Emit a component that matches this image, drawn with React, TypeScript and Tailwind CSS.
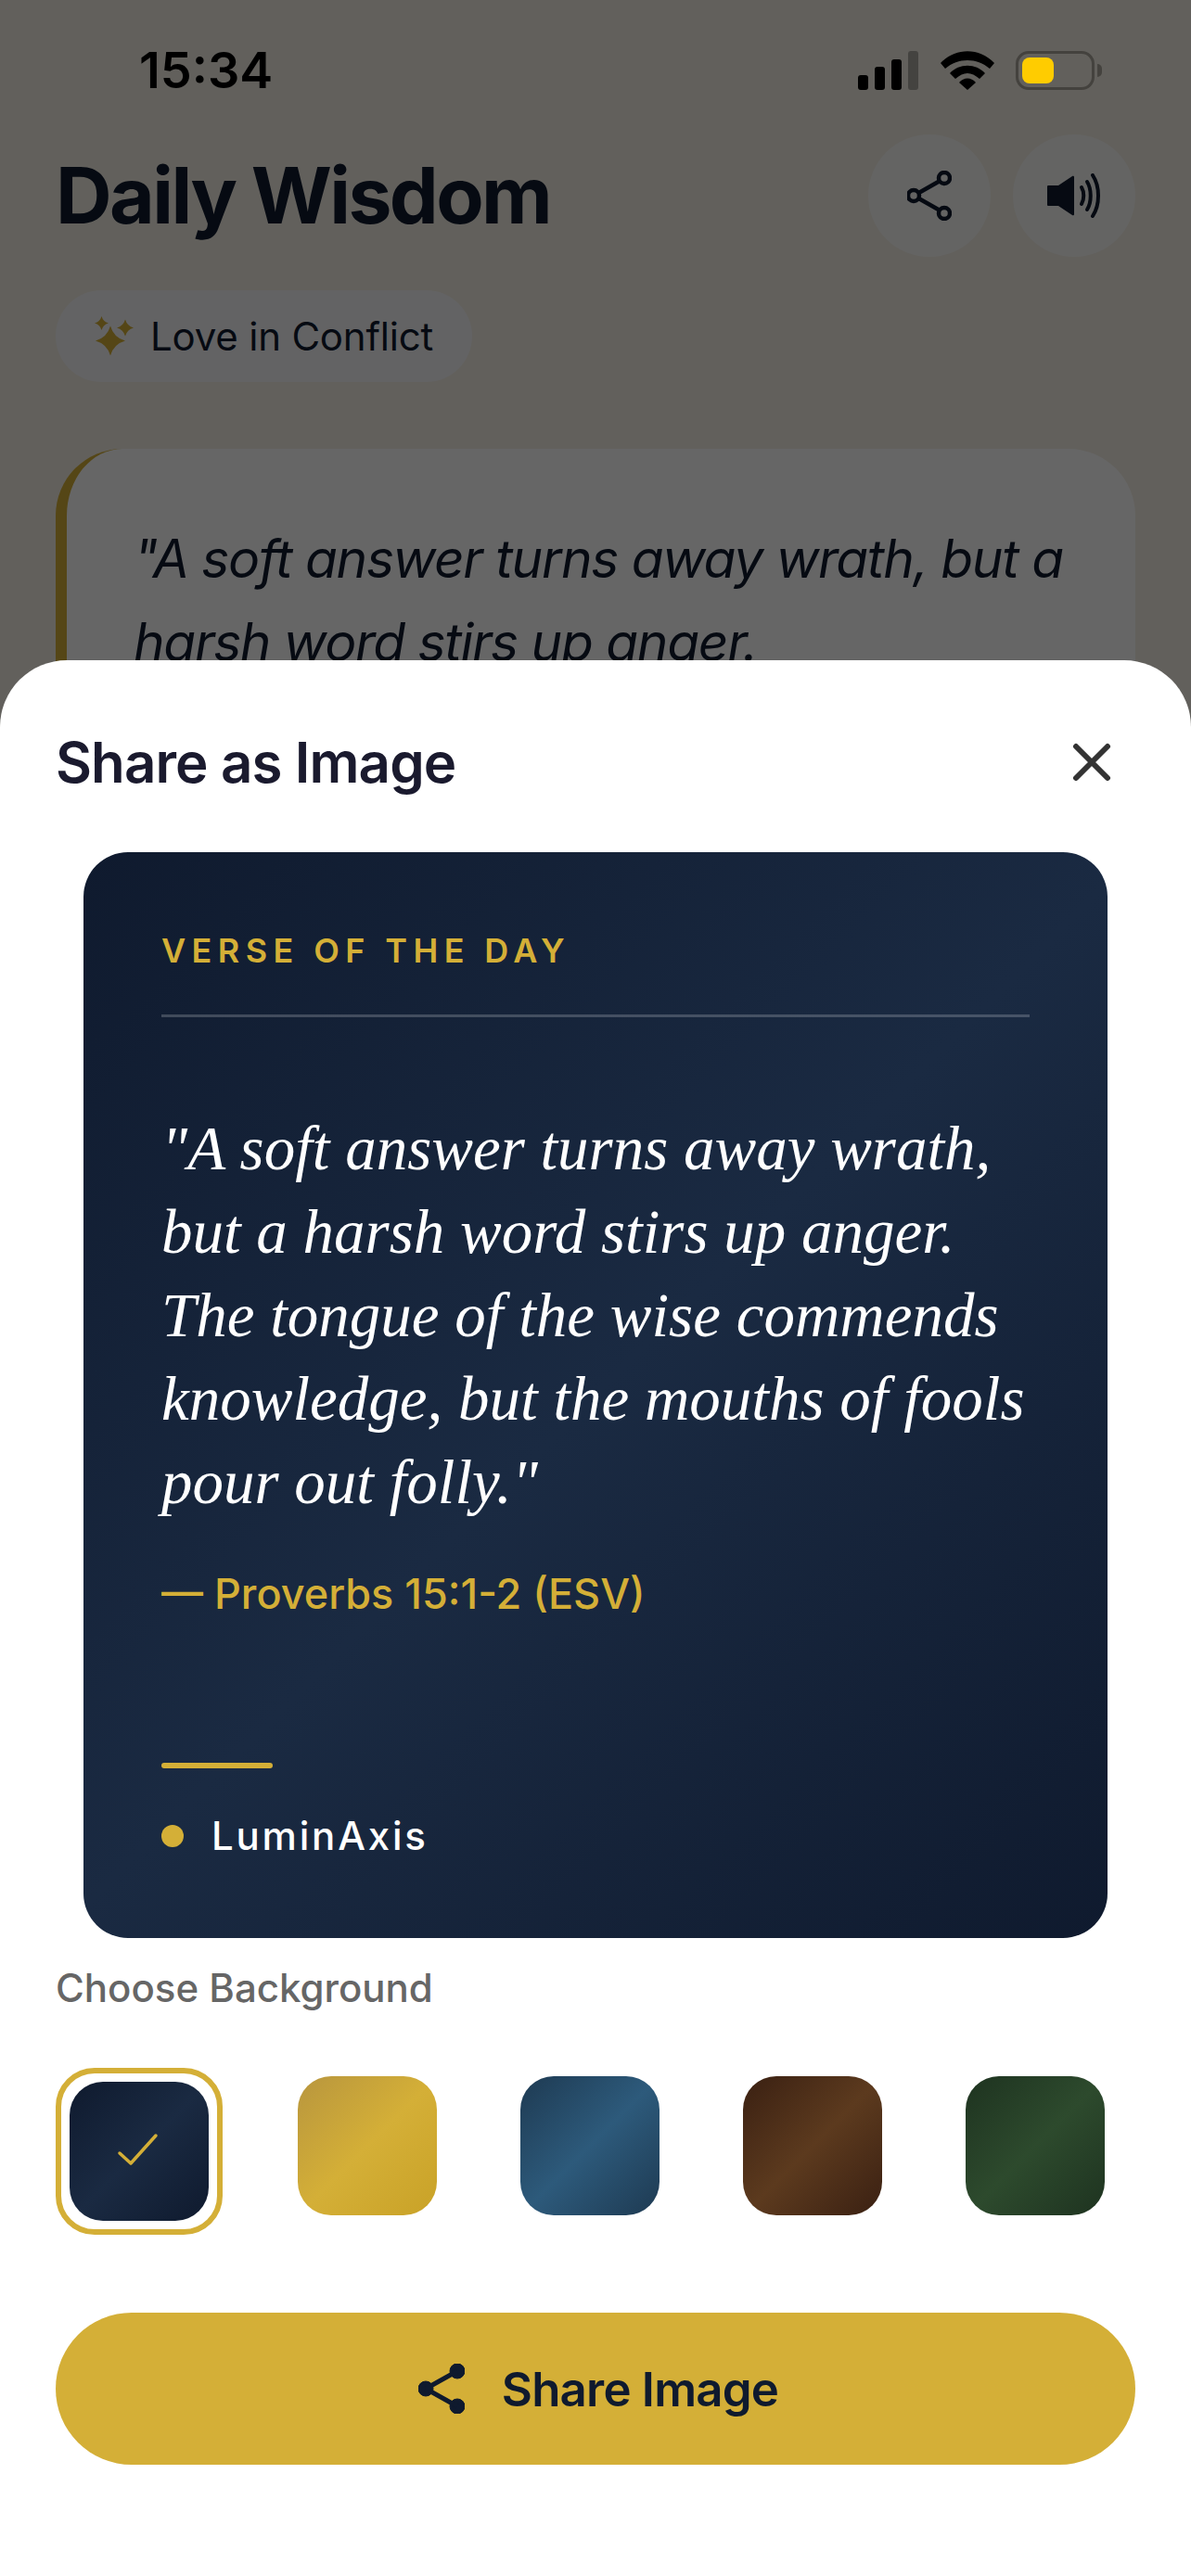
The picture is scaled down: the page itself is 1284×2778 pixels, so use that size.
import React from "react";

const ShareOutline = () => (
  <svg viewBox="0 0 48 54" className="w-[48px] h-[54px]" fill="none" stroke="#0f1a2e" strokeWidth="4.5">
    <circle cx="40" cy="8" r="6" />
    <circle cx="7" cy="27" r="6" />
    <circle cx="40" cy="46" r="6" />
    <path d="M12.5 24 34.5 11.5M12.5 30 34.5 42.5" />
  </svg>
);

const Speaker = () => (
  <svg viewBox="0 0 60 48" className="w-[60px] h-[48px]" fill="none" stroke="#0f1a2e" strokeWidth="4" strokeLinecap="round">
    <path d="M2 13h11L28 3c1-.7 2 0 2 1v40c0 1-1 1.700-2 1L13 35H2c-1 0-1-1-1-1V14c0-1 1-1 1-1Z" fill="#0f1a2e" stroke="none" />
    <path d="M38 15c3 5 3 13 0 18" />
    <path d="M44 9c5 8 5 22 0 30" />
    <path d="M50 2c8 12 8 32 0 44" />
  </svg>
);

const StatusIcons = () => (
  <div className="flex items-center">
    <svg viewBox="0 0 66 42" className="w-[66px] h-[42px]">
      <rect x="0" y="26" width="11" height="16" rx="3" fill="#000" />
      <rect x="18" y="17" width="11" height="25" rx="3" fill="#000" />
      <rect x="36" y="9" width="11" height="33" rx="3" fill="#000" />
      <rect x="54" y="0" width="11" height="42" rx="3" fill="#000" fillOpacity="0.3" />
    </svg>
    <svg viewBox="0 0 58 42" className="w-[58px] h-[42px] ml-[23px]">
      <path d="M0 13C16-4 42-4 58 13l-5 6C39 7 19 7 5 19Z" fill="#000" />
      <path d="M10 24C20 13 38 13 48 24l-6 6C33 22 25 22 16 30Z" fill="#000" />
      <path d="M20 34C25 28 33 28 38 34l-9 8Z" fill="#000" />
    </svg>
    <div className="ml-[23px] w-[85px] h-[42px] rounded-[14px] border-[3px] border-[#44423e] p-[4px]">
      <div className="w-[34px] h-full rounded-[8px] bg-[#ffcc00]" />
    </div>
    <div className="ml-[3px] w-[5px] h-[14px] rounded-r-[5px] bg-[#44423e]" />
  </div>
);

const Swatch = ({ from, via, to }: { from: string; via: string; to: string }) => (
  <div className="mt-[9px] w-[150px] h-[150px] shrink-0 rounded-[36px]" style={{ background: `linear-gradient(135deg, ${from} 0%, ${via} 50%, ${to} 100%)` }} />
);

export default function App() {
  return (
    <div className="relative w-[1284px] h-[2778px] overflow-hidden bg-[#f5f0e6] font-['Inter',sans-serif] text-[#0f1a2e]">
      {/* page behind the sheet */}
      <div className="px-[60px] pt-[145px]">
        <div className="flex items-center justify-between">
          <h1 className="text-[84px] leading-[132px] font-bold tracking-[-2.600px]">Daily Wisdom</h1>
          <div className="flex gap-[24px]">
            <div className="w-[132px] h-[132px] rounded-full bg-[#fafaf8] flex items-center justify-center">
              <ShareOutline />
            </div>
            <div className="w-[132px] h-[132px] rounded-full bg-[#fafaf8] flex items-center justify-center">
              <Speaker />
            </div>
          </div>
        </div>
        <div className="mt-[36px] inline-flex items-center h-[99px] pl-[40px] pr-[42px] rounded-full bg-[#f8f8fa]">
          <svg viewBox="0 0 46 46" className="w-[46px] h-[46px] mr-[16px]" fill="#d4af37">
            <path d="M19 11.500Q22.500 24 35 27.500 22.500 31 19 43.500 15.500 31 3 27.500 15.500 24 19 11.500Z" />
            <path d="M9.500 1Q11.100 6.900 17 8.500 11.100 10.100 9.500 16 7.900 10.100 2 8.500 7.900 6.900 9.500 1Z" />
            <path d="M35 4.500Q37 11.500 44 13.500 37 15.500 35 22.500 33 15.500 26 13.500 33 11.500 35 4.500Z" />
          </svg>
          <span className="text-[42px] leading-none tracking-[-0.2px]">Love in Conflict</span>
        </div>
        <div className="mt-[72px] h-[600px] rounded-[72px] border-l-[12px] border-[#d4af37] bg-white pl-[72px] pr-[60px] pt-[74px]">
          <p className="text-[57px] leading-[90px] italic tracking-[-1.350px]">"A soft answer turns away wrath, but a harsh word stirs up anger.</p>
        </div>
      </div>

      <div className="absolute inset-0 bg-black/60" />

      {/* status bar */}
      <div className="absolute top-[55px] left-[150px] right-[96px] flex items-center justify-between text-black">
        <span className="text-[54px] leading-[42px] font-semibold">15:34</span>
        <StatusIcons />
      </div>

      {/* share sheet */}
      <div className="absolute left-0 right-0 bottom-0 h-[2066px] rounded-t-[72px] bg-white">
        <div className="flex items-center justify-between px-[60px] pt-[74px]">
          <h2 className="text-[60px] leading-[72px] font-semibold text-[#1a1a2e] tracking-[-0.900px]">Share as Image</h2>
          <svg viewBox="0 0 42 42" className="w-[42px] h-[42px] mr-[26px]" fill="none" stroke="#333" strokeWidth="6" strokeLinecap="round">
            <path d="M4 4 38 38M38 4 4 38" />
          </svg>
        </div>

        <div className="mx-[90px] mt-[61px] h-[1171px] rounded-[48px] bg-[linear-gradient(135deg,#0f1a2e_0%,#1a2a42_50%,#0f1a2e_100%)] px-[84px] pt-[84px]">
          <div className="text-[36px] leading-[44px] font-semibold tracking-[6.400px] text-[#d4af37] border-b-[3px] border-white/20 pb-[47px]">VERSE OF THE DAY</div>
          <p className="mt-[96px] font-['Liberation_Serif',serif] italic text-[67px] leading-[90px] text-white">"A soft answer turns away wrath, but a harsh word stirs up anger. The tongue of the wise commends knowledge, but the mouths of fools pour out folly."</p>
          <div className="mt-[46px] text-[45px] leading-[60px] font-medium text-[#d4af37]">— Proverbs 15:1-2 (ESV)</div>
          <div className="mt-[152px] w-[120px] h-[6px] rounded-full bg-[#d4af37]" />
          <div className="mt-[49px] flex items-center gap-[30px]">
            <div className="w-[24px] h-[24px] rounded-full bg-[#d4af37]" />
            <span className="text-[42px] leading-[48px] font-medium tracking-[2.800px] text-white">LuminAxis</span>
          </div>
        </div>

        <div className="px-[60px] mt-[29px] text-[42px] leading-[50px] font-medium text-[#666]">Choose Background</div>

        <div className="flex items-start pl-[60px] mt-[61px]">
          <div className="w-[180px] h-[180px] shrink-0 rounded-[42px] border-[6px] border-[#d4af37] p-[9px] mr-[81px]">
            <div className="w-full h-full rounded-[36px] bg-[linear-gradient(135deg,#0f1a2e_0%,#1a2a42_50%,#0f1a2e_100%)] flex items-center justify-center">
              <svg viewBox="0 0 48 40" className="w-[48px] h-[40px]" fill="none" stroke="#d4af37" strokeWidth="3.500" strokeLinecap="round" strokeLinejoin="round">
                <path d="M3 22 15 33 42 3" />
              </svg>
            </div>
          </div>
          <div className="flex gap-[90px]">
            <Swatch from="#b8963e" via="#d4af37" to="#c9a227" />
            <Swatch from="#1e3a52" via="#2d5a7b" to="#1e3a52" />
            <Swatch from="#3a2012" via="#5c3a1e" to="#3a2012" />
            <Swatch from="#1e3320" via="#2d4a2d" to="#1e3320" />
          </div>
        </div>

        <div className="mx-[60px] mt-[84px] h-[164px] pl-[6px] rounded-full bg-[#d4af37] flex items-center justify-center gap-[40px]">
          <svg viewBox="0 0 50 54" className="w-[50px] h-[54px]" fill="#0f1a2e" stroke="#0f1a2e">
            <circle cx="42" cy="8" r="8" />
            <circle cx="8" cy="27" r="8" />
            <circle cx="42" cy="46" r="8" />
            <path d="M8 27 42 8M8 27 42 46" strokeWidth="5" />
          </svg>
          <span className="text-[51px] leading-none font-semibold tracking-[-0.800px]">Share Image</span>
        </div>
      </div>
    </div>
  );
}
